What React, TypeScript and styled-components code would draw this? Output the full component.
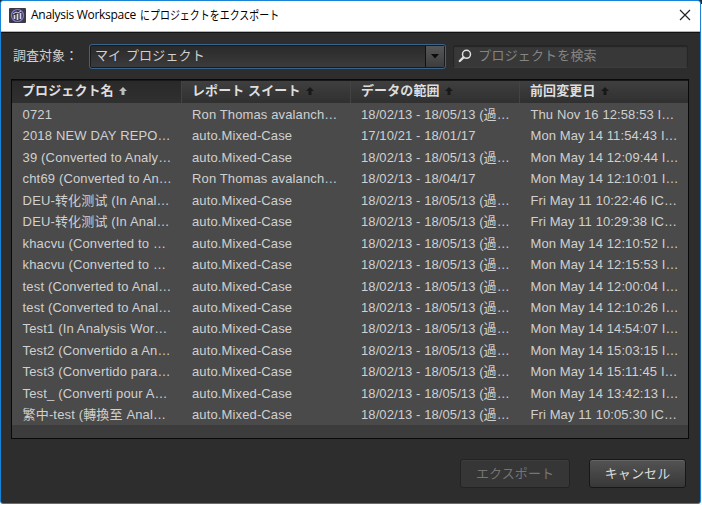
import React from "react";
import styled, { createGlobalStyle } from "styled-components";

const Global = createGlobalStyle`
  * { box-sizing: border-box; }
  body { margin: 0; background: #fff; overflow: hidden; }
`;

const Stage = styled.div`
  width: 702px;
  height: 505px;
  padding-right: 1px;
  background: linear-gradient(#1b2a36 0 4px, #fff 4px);
`;

const Window = styled.div`
  width: 701px;
  height: 504px;
  border: 1px solid #1883d7;
  border-radius: 3px;
  overflow: hidden;
  background: #2d2d2d;
  display: flex;
  flex-direction: column;
  font-family: "Liberation Sans", "Noto Sans CJK JP", sans-serif;
  font-size: 13px;
  color: #d0d0d0;
`;

const TitleBar = styled.header`
  height: 32px;
  flex: none;
  display: flex;
  align-items: center;
  background: #fff;
  border-bottom: 1px solid #111;
  box-shadow: inset 0 -1px #b4b4b4;
  padding: 0 9px 3px 8px;
  color: #000;
`;

const Title = styled.h1`
  margin: 0 auto 0 5px;
  font: 400 12px/18px "Open Sans", "Noto Sans CJK JP", sans-serif;
  display: flex;
  white-space: nowrap;
`;

const Latin = styled.span`
  width: 109px;
  letter-spacing: -0.28px;
`;

const Kana = styled.span`
  font-family: "Noto Sans CJK JP", sans-serif;
  letter-spacing: 0;
  transform: scaleX(0.83);
  transform-origin: left;
`;

const Toolbar = styled.div`
  height: 46px;
  flex: none;
  display: flex;
  align-items: center;
  padding: 0 12px 0 12px;
`;

const Label = styled.label`
  width: 76px;
  padding-bottom: 3px;
  white-space: nowrap;
`;

const Select = styled.div`
  width: 358px;
  height: 25px;
  display: flex;
  align-items: center;
  justify-content: space-between;
  padding-left: 5px;
  border: 1px solid #3b648c;
  border-radius: 3px;
  background: linear-gradient(#292929, #3c3c3c);
  box-shadow: inset 0 0 0 1px #161b20;
`;

const FieldText = styled.span`
  padding-bottom: 3px;
  letter-spacing: 0.15px;
  word-spacing: 1px;
  white-space: nowrap;
`;

const SelectArrow = styled.span`
  width: 19px;
  height: 21px;
  margin-right: 1px;
  display: grid;
  place-items: center;
  border-left: 1px solid #111;
  background: linear-gradient(#575757, #3d3d3d);
`;

const Search = styled.div`
  width: 235px;
  height: 23px;
  margin-left: 7px;
  padding-left: 4px;
  display: flex;
  align-items: center;
  gap: 6px;
  border: 1px solid #252525;
  border-bottom-color: #3c3c3c;
  border-radius: 2px;
  background: #383838;
  box-shadow: inset 0 1px 1px #252525;
  color: #858585;
`;

const Table = styled.div`
  width: 678px;
  height: 360px;
  margin-left: 10px;
  flex: none;
  border: 1px solid #090909;
  background: #3c3c3c;
`;

const COLUMNS = "170px 169px 169px 168px";

const HeaderRow = styled.div`
  height: 23px;
  display: grid;
  grid-template-columns: ${COLUMNS};
  border-top: 1px solid #171717;
`;

const HeaderCell = styled.div<{ $sorted: boolean }>`
  height: 22px;
  display: flex;
  align-items: center;
  gap: 5px;
  padding: 0 0 2px 10px;
  font-weight: 700;
  letter-spacing: 0.1px;
  color: #dedede;
  white-space: nowrap;
  background: ${(p) => (p.$sorted ? "linear-gradient(#292929, #303030)" : "linear-gradient(#3f3f3f, #303030)")};
  border-right: 1px solid #434343;
  &:last-child {
    border-right: 0;
  }
`;

const HeaderText = styled.span`
  padding-bottom: 4px;
`;

const Body = styled.div`
  height: 322px;
  padding-top: 1px;
  display: grid;
  grid-template-rows: repeat(15, 21.45px);
  background: #4a4a4a;
`;

const Row = styled.div`
  display: grid;
  grid-template-columns: ${COLUMNS};
`;

const Cell = styled.div<{ $cjk: string; $spacing: number; $inset: number }>`
  height: 21px;
  line-height: 22px;
  padding-left: ${(p) => p.$inset}px;
  white-space: pre;
  overflow: hidden;
  font-family: "Liberation Sans", "Noto Sans CJK ${(p) => p.$cjk}", sans-serif;
  letter-spacing: ${(p) => p.$spacing}px;
`;

const Footer = styled.footer`
  display: flex;
  justify-content: flex-end;
  gap: 19px;
  padding: 20px 14px 0 0;
`;

const Button = styled.button`
  height: 29px;
  width: 97px;
  padding: 0 0 3px;
  font: inherit;
  letter-spacing: 0.1px;
  color: #dcdcdc;
  border: 1px solid #171717;
  border-radius: 3px;
  background: linear-gradient(#535353, #383838);
  box-shadow: inset 0 1px #666;
  &:disabled {
    width: 110px;
    color: #757575;
    border-color: #232323;
    background: #363636;
    box-shadow: inset 0 1px #3d3d3d;
  }
`;

const AppIcon = () => (
  <svg width="17" height="15" viewBox="0 0 17 15">
    <rect width="17" height="15" rx="1" fill="#3a3a42" />
    <circle cx="8.5" cy="7.5" r="6" fill="#383448" stroke="#8878d8" strokeWidth="1.2" />
    <path d="M5.5 7v4M8.5 6v6M11.5 5v6" stroke="#d4d4dc" strokeWidth="1.7" />
    <path d="M4 6l3-2 2 1 3-2" fill="none" stroke="#d4d4dc" />
  </svg>
);

const CloseIcon = () => (
  <svg width="12" height="12" viewBox="0 0 12 12">
    <path d="M1 1l10 10M11 1L1 11" stroke="#222" strokeWidth="1.15" />
  </svg>
);

const SearchIcon = () => (
  <svg width="14" height="14" viewBox="0 0 14 14" fill="none" stroke="#dedede">
    <circle cx="8.5" cy="5.3" r="4" strokeWidth="1.5" />
    <path d="M5.5 8.3L1.8 12" strokeWidth="2.4" strokeLinecap="round" />
  </svg>
);

const SortArrow = ({ active }: { active: boolean }) => (
  <svg width="8" height="8" viewBox="0 0 8 8">
    <path d="M4 0l4 4H5.5v4h-3V4H0z" fill={active ? "#bdbdbd" : "#181818"} />
  </svg>
);

const headers = ["プロジェクト名", "レポート スイート", "データの範囲", "前回変更日"];
const mixed = "auto.Mixed-Case";
const ron = "Ron Thomas avalanch…";
const range = "18/02/13 - 18/05/13 (過…";

const rows = [
  ["0721", ron, range, "Thu Nov 16 12:58:53 I…"],
  ["2018 NEW DAY REPO…", mixed, "17/10/21 - 18/01/17", "Mon May 14 11:54:43 I…"],
  ["39 (Converted to Analy…", mixed, range, "Mon May 14 12:09:44 I…"],
  ["cht69 (Converted to An…", ron, "18/02/13 - 18/04/17", "Mon May 14 12:10:01 I…"],
  ["DEU-转化测试 (In Anal…", mixed, range, "Fri May 11 10:22:46 IC…"],
  ["DEU-转化测试 (In Anal…", mixed, range, "Fri May 11 10:29:38 IC…"],
  ["khacvu (Converted to …", mixed, range, "Mon May 14 12:10:52 I…"],
  ["khacvu (Converted to …", mixed, range, "Mon May 14 12:15:53 I…"],
  ["test (Converted to Anal…", mixed, range, "Mon May 14 12:00:04 I…"],
  ["test (Converted to Anal…", mixed, range, "Mon May 14 12:10:26 I…"],
  ["Test1 (In Analysis Wor…", mixed, range, "Mon May 14 14:54:07 I…"],
  ["Test2 (Convertido a An…", mixed, range, "Mon May 14 15:03:15 I…"],
  ["Test3 (Convertido para…", mixed, range, "Mon May 14 15:11:45 I…"],
  ["Test_ (Converti pour A…", mixed, range, "Mon May 14 13:42:13 I…"],
  ["繁中-test (轉換至 Anal…", mixed, range, "Fri May 11 10:05:30 IC…"],
];

const cellMetrics = [
  { inset: 10.6, spacing: 0.15 },
  { inset: 10, spacing: 0.13 },
  { inset: 10, spacing: 0.09 },
  { inset: 10.5, spacing: 0.1 },
];

const cjkFor = (text: string) => (text.includes("转") ? "SC" : text.includes("繁") ? "TC" : "JP");

export default function App() {
  return (
    <Stage>
      <Global />
      <Window>
        <TitleBar>
          <AppIcon />
          <Title>
            <Latin>Analysis Workspace</Latin>
            <Kana>にプロジェクトをエクスポート</Kana>
          </Title>
          <CloseIcon />
        </TitleBar>
        <Toolbar>
          <Label>調査対象：</Label>
          <Select>
            <FieldText>マイ プロジェクト</FieldText>
            <SelectArrow>
              <svg width="8" height="5" viewBox="0 0 8 5">
                <path d="M0 0h8L4 4.5z" fill="#0c0c0c" />
              </svg>
            </SelectArrow>
          </Select>
          <Search>
            <SearchIcon />
            <FieldText>プロジェクトを検索</FieldText>
          </Search>
        </Toolbar>
        <Table>
          <HeaderRow>
            {headers.map((h, i) => (
              <HeaderCell key={h} $sorted={i === 0}>
                <HeaderText>{h}</HeaderText>
                <SortArrow active={i === 0} />
              </HeaderCell>
            ))}
          </HeaderRow>
          <Body>
            {rows.map((row, r) => (
              <Row key={r}>
                {row.map((text, c) => (
                  <Cell key={c} $cjk={cjkFor(text)} $spacing={cellMetrics[c].spacing} $inset={cellMetrics[c].inset}>
                    {text}
                  </Cell>
                ))}
              </Row>
            ))}
          </Body>
        </Table>
        <Footer>
          <Button disabled>エクスポート</Button>
          <Button>キャンセル</Button>
        </Footer>
      </Window>
    </Stage>
  );
}
